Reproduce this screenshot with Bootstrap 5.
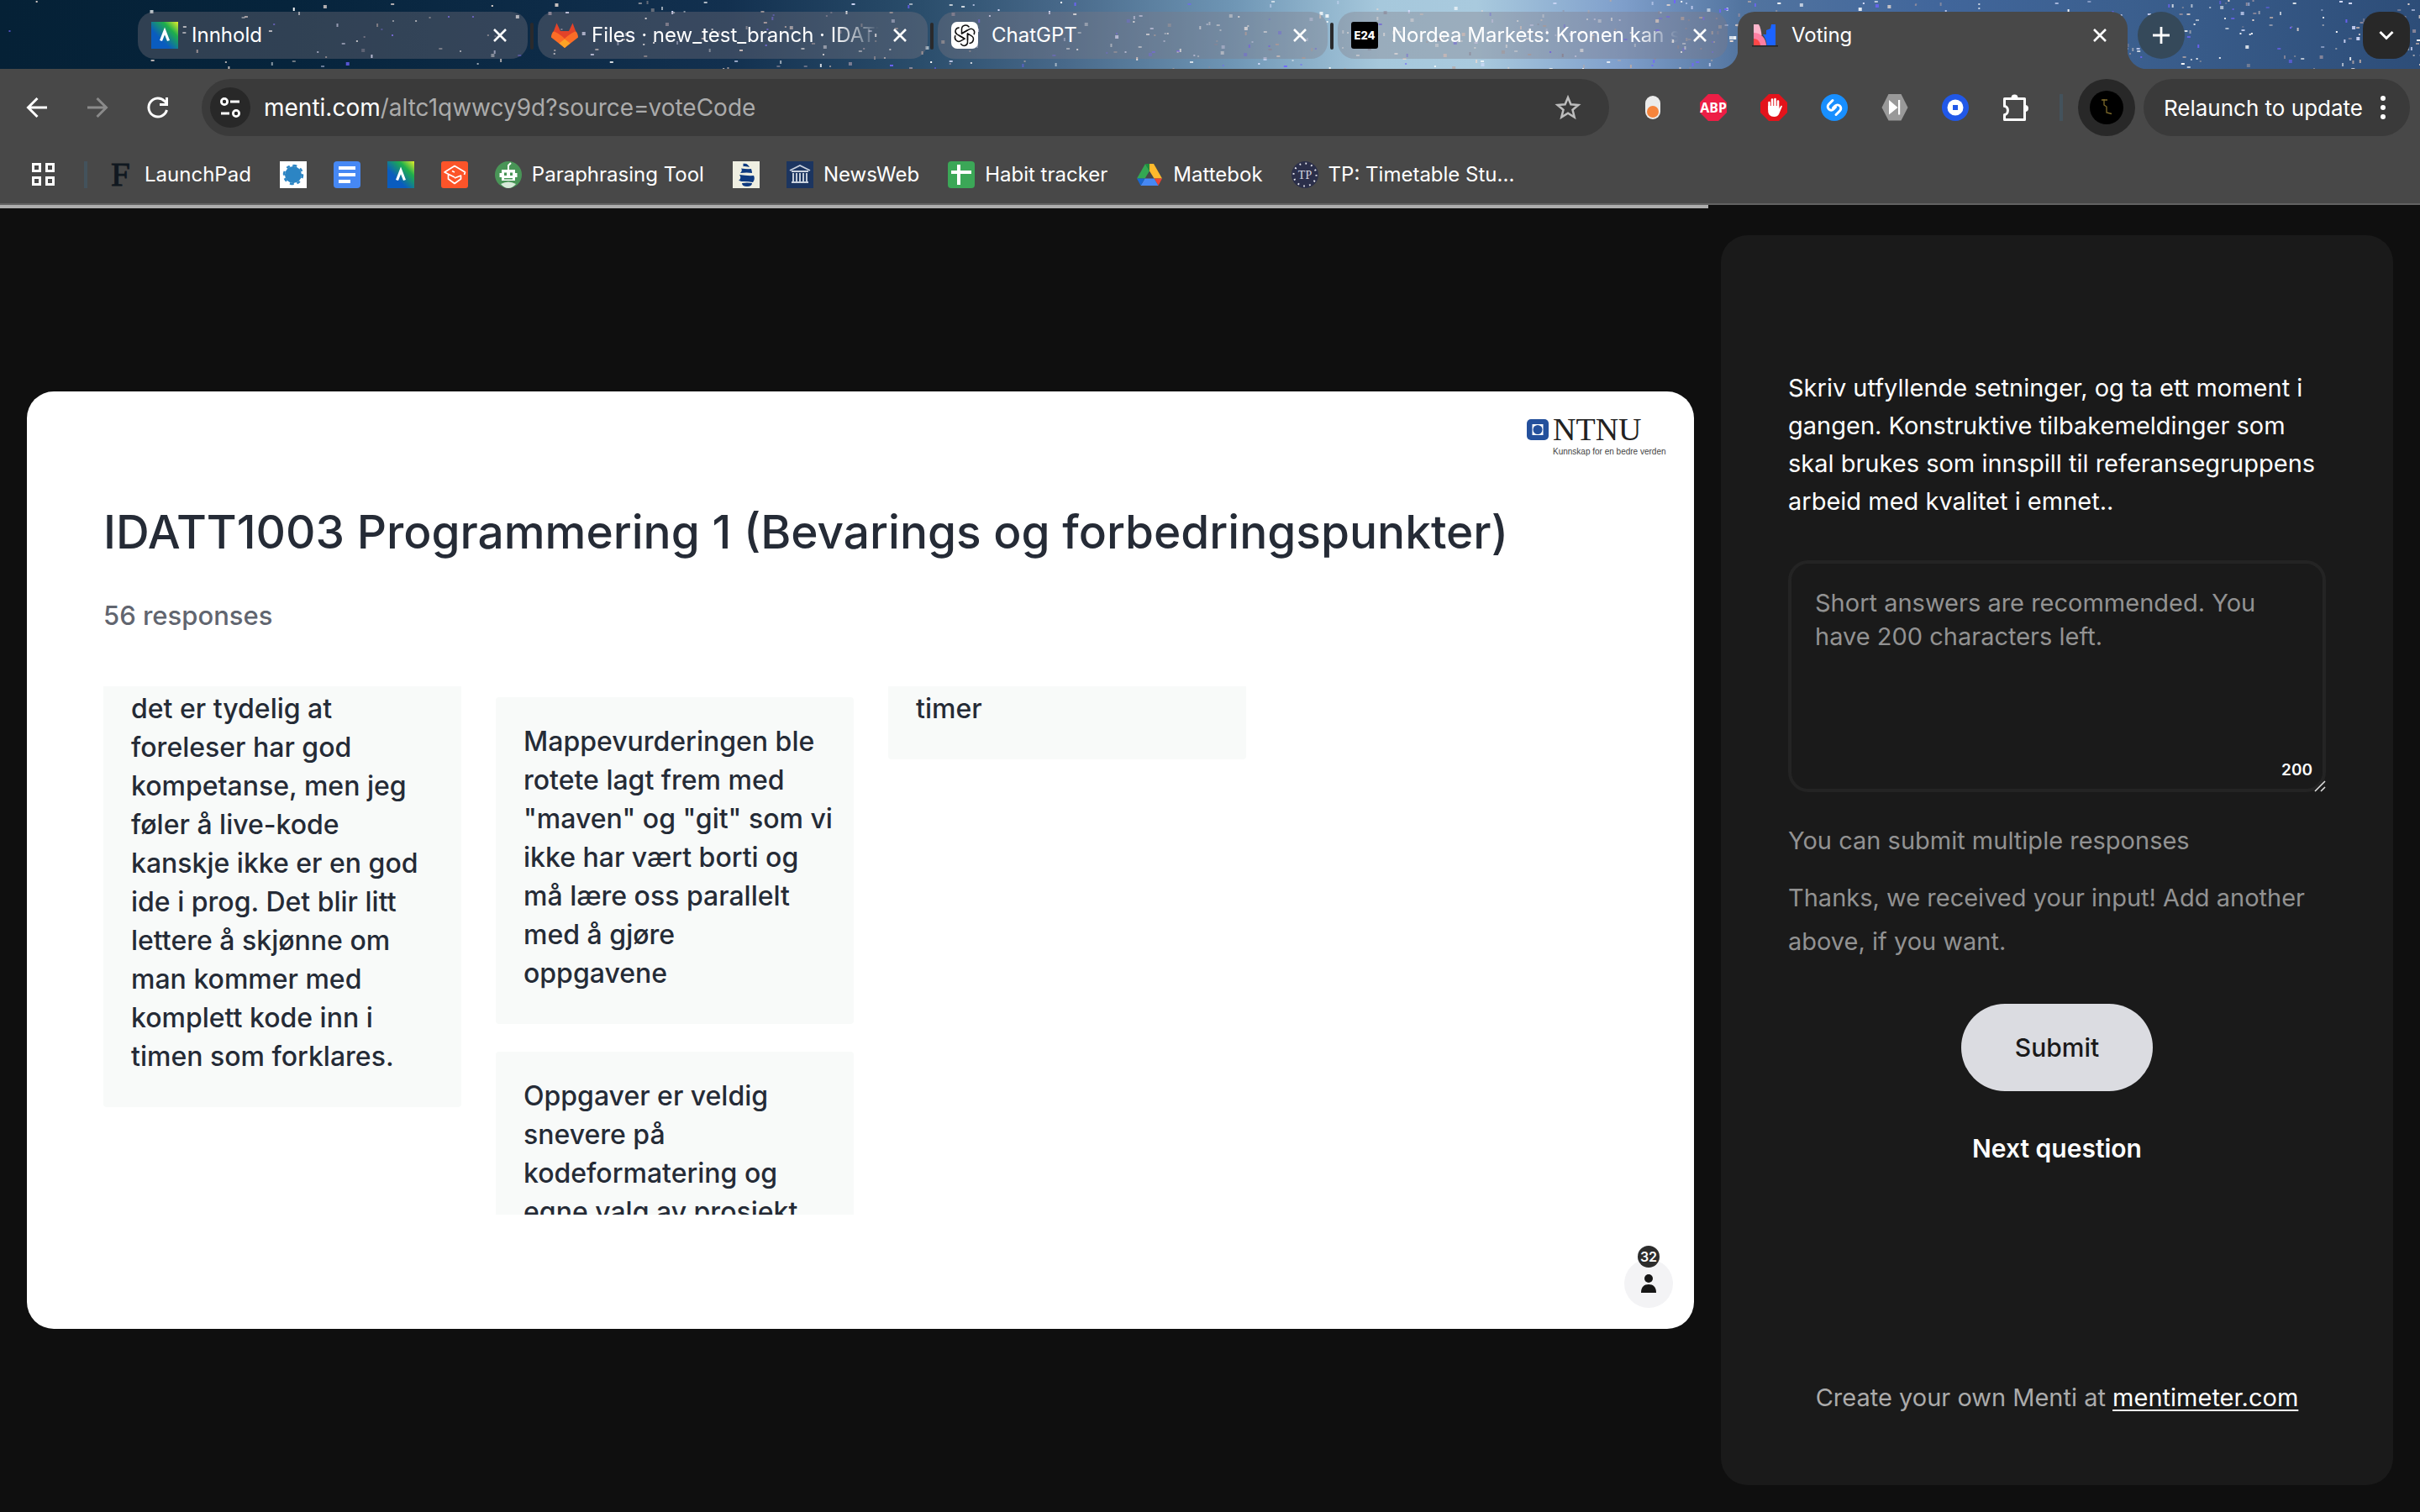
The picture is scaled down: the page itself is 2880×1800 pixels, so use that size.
<!DOCTYPE html>
<html lang="no">
<head>
<meta charset="utf-8">
<meta name="viewport" content="width=device-width, initial-scale=1">
<title>Voting</title>
<link href="https://cdn.jsdelivr.net/npm/bootstrap@5.3.0/dist/css/bootstrap.min.css" rel="stylesheet">
<style>
  body { background: #0f0f0f; font-family: Inter, "Noto Sans", sans-serif; font-size: 24px; color: #fff; }
  button { color: inherit; background: none; border: 0; padding: 0; }
  svg { display: block; flex: none; overflow: visible; }

  /* tab strip */
  .tabstrip { height: 82px; padding: 14px 12px 0 164px; gap: 12px; overflow: hidden;
    background: linear-gradient(90deg, #052136 0, #06243c 12%, #12304f 30%, #2a4d6b 38%, #48698a 44%, #6f96b5 51%, #a6c8dc 57%, #a9cade 61%, #7f9fcb 67%, #52749f 72%, #41669b 80%, #3b5f8e 88%, #2d4d78 100%); }
  .starfield { position: absolute; inset: 0; width: 100%; height: 100%; overflow: hidden; }
  .browser-tab { position: relative; flex: 0 1 464px; min-width: 0; height: 56px; border-radius: 20px; padding: 0 24px 0 16px; gap: 16px; background: rgba(128,120,128,.35); line-height: 32px; }
  .browser-tab + .browser-tab:not(.is-active)::before { content: ""; position: absolute; left: -9px; top: 13px; width: 4px; height: 32px; border-radius: 2px; background: #2a2a2c; }
  .tab-title { flex: 1 1 0; min-width: 0; white-space: nowrap; overflow: hidden; }
  .tab-fade { -webkit-mask-image: linear-gradient(90deg, #000 85%, transparent); mask-image: linear-gradient(90deg, #000 85%, transparent); }
  .is-active { height: 68px; background: #484848; border-radius: 20px 20px 0 0; padding-bottom: 12px; }
  .is-active::before, .is-active::after { content: ""; position: absolute; bottom: 0; width: 24px; height: 24px; }
  .is-active::before { left: -24px; background: radial-gradient(circle at 0 0, transparent 24px, #484848 25px); }
  .is-active::after { right: -24px; background: radial-gradient(circle at 100% 0, transparent 24px, #484848 25px); }
  .new-tab { width: 56px; height: 56px; border-radius: 50%; background: #35495a; }
  .tab-search { width: 56px; height: 56px; border-radius: 20px; background: #282828; }

  /* toolbar */
  .browser-bars { background: #484848; border-bottom: 2px solid #626262; }
  .tool-row { padding: 12px 12px 12px 30px; height: 92px; }
  .nav-icons { gap: 44px; width: 210px; }
  .omnibox { flex: 1 1 0; height: 68px; border-radius: 34px; background: #3a3a3a; padding: 0 34px 0 10px; gap: 16px; font-size: 28px; }
  .site-info { width: 48px; height: 48px; border-radius: 50%; background: #282828; }
  .url-path { color: #ababab; }
  .extensions { gap: 40px; padding: 0 36px; }
  .thin-rule { width: 4px; height: 32px; background: #43525c; }
  .profile { width: 68px; height: 68px; border-radius: 50%; background: #282828; margin: 0 10px 0 18px; }
  .relaunch { height: 68px; border-radius: 34px; background: #3a3a3a; padding: 0 20px 0 24px; gap: 12px; font-size: 26px; }
  .bookmarks { height: 68px; padding-left: 36px; gap: 32px; }
  .bookmarks a { color: #fff; text-decoration: none; gap: 12px; white-space: nowrap; }
  .bookmarks > .d-flex { margin-right: 2px; }
  .load-track { height: 4px; border-radius: 0; background: transparent; }
  .load-track .progress-bar { background: #acacac; }

  /* page */
  .stage { padding: 32px; gap: 32px; }
  .slide { flex: 1 1 0; min-width: 0; aspect-ratio: 16 / 9; background: #fff; color: #252b36; border-radius: 32px; padding: 131px 66px 136px 91px; }
  .slide h1 { font-size: 55px; line-height: 72px; font-weight: 500; margin: 0 0 41px; white-space: nowrap; }
  .response-count { font-size: 31px; line-height: 46px; font-weight: 500; color: #61656f; margin: 0 0 61px; }
  .wall { flex: 1 1 0; min-height: 0; overflow: hidden; display: grid; grid-template-columns: repeat(4, 1fr); column-gap: 41px; font-size: 32px; line-height: 46px; font-weight: 500; }
  .wall-col { gap: 33px; }
  .response { background: #f8faf9; border-radius: 4px; padding: 30px 0 37px 33px; white-space: nowrap; }
  .cut-top { padding-top: 4px; border-radius: 0 0 4px 4px; }
  .offset-col { padding-top: 13px; }
  .ntnu { position: absolute; top: 32px; right: 32px; width: 168px; height: 52px; }
  .people { position: absolute; right: 25px; bottom: 25px; width: 58px; height: 58px; border-radius: 50%; background: #f3f3f5; }
  .people-count { position: absolute; top: -16px; left: 16px; width: 26px; height: 26px; border-radius: 50%; background: #2c2c2c; color: #fff; font-size: 16px; line-height: 26px; font-weight: 600; text-align: center; }

  .vote-panel { flex: 0 0 800px; background: #1a1a1a; border-radius: 32px; padding: 159px 80px 78px; font-size: 29px; }
  .question { line-height: 45px; margin: 0 0 48px; white-space: nowrap; }
  .answer { height: 276px; resize: none; background: transparent; border: 4px solid #242424; border-radius: 24px; padding: 27px 28px; font-size: 29px; line-height: 40px; color: #fff; }
  .answer::placeholder { color: #929292; opacity: 1; }
  .answer:focus { background: transparent; color: #fff; }
  .chars-left { position: absolute; right: 16px; bottom: 12px; font-size: 19px; line-height: 28px; font-weight: 600; }
  .grip { position: absolute; right: 0; bottom: 0; }
  .hint { color: #929292; line-height: 52px; margin: 0; }
  .submit-btn { width: 228px; height: 104px; border-radius: 52px; background: #dbdce1; color: #1a1a1a; font-size: 30px; font-weight: 500; }
  .next-btn { font-size: 30px; line-height: 40px; font-weight: 600; }
  .credit { color: #ababab; line-height: 52px; }
  .credit a { color: #fff; text-underline-offset: 4px; }
</style>
</head>
<body class="d-flex flex-column min-vh-100">

<header>
  <div class="tabstrip d-flex align-items-start position-relative">
    <svg class="starfield" id="stars" aria-hidden="true"></svg>

    <div class="browser-tab d-flex align-items-center">
      <svg width="32" height="32" viewBox="0 0 32 32"><defs><linearGradient id="bb" x1="0" y1="1" x2="1" y2="0"><stop offset=".35" stop-color="#0a5cbf"/><stop offset=".72" stop-color="#1fae4b"/><stop offset="1" stop-color="#e6ee2a"/></linearGradient></defs><path fill="url(#bb)" d="M0 0h32v32H0z"/><path d="M11.500 22.500 16 11l4.500 11.500" fill="none" stroke="#fff" stroke-width="3.200"/></svg>
      <span class="tab-title">Innhold</span>
      <button aria-label="Close tab"><svg width="18" height="18" viewBox="0 0 18 18"><path d="m2 2 14 14M16 2 2 16" stroke="#fff" stroke-width="2.600"/></svg></button>
    </div>

    <div class="browser-tab d-flex align-items-center">
      <svg width="32" height="32" viewBox="0 0 32 32"><path fill="#e24329" d="M6.500 1.500 11 11h10l4.500-9.500L31 16 16 31 1 16z"/><path fill="#fc6d26" d="M0 18.500C0 15 1.500 12 3 11.500c3 .5 8 4 13 8.500 5-4.500 10-8 13-8.500 1.500.5 3 3.500 3 7L16 31z"/><path fill="#fca326" d="m9.500 25.500 6.500-5 6.500 5L16 31z"/></svg>
      <span class="tab-title tab-fade">Files · new_test_branch · IDATT</span>
      <button aria-label="Close tab"><svg width="18" height="18" viewBox="0 0 18 18"><path d="m2 2 14 14M16 2 2 16" stroke="#fff" stroke-width="2.600"/></svg></button>
    </div>

    <div class="browser-tab d-flex align-items-center">
      <svg width="32" height="32" viewBox="0 0 32 32"><rect width="32" height="32" rx="7" fill="#fff"/><g fill="none" stroke="#111" stroke-width="1.500" stroke-linecap="round"><path id="petal" d="M12.500 14V8.800c0-5 6-6.300 8.600-2.800M12.500 14l3.500-2 5.500-3.200c4-2 7.500 2 5.700 5.800"/><use href="#petal" transform="rotate(120 16 16)"/><use href="#petal" transform="rotate(240 16 16)"/><path id="inner" d="M19.500 14v7.500"/><use href="#inner" transform="rotate(120 16 16)"/><use href="#inner" transform="rotate(240 16 16)"/></g></svg>
      <span class="tab-title">ChatGPT</span>
      <button aria-label="Close tab"><svg width="18" height="18" viewBox="0 0 18 18"><path d="m2 2 14 14M16 2 2 16" stroke="#fff" stroke-width="2.600"/></svg></button>
    </div>

    <div class="browser-tab d-flex align-items-center">
      <svg width="32" height="32" viewBox="0 0 32 32"><rect width="32" height="32" rx="3"/><text x="16" y="21" text-anchor="middle" font-size="13" font-weight="800" fill="#fff">E24</text></svg>
      <span class="tab-title tab-fade">Nordea Markets: Kronen kan styrke</span>
      <button aria-label="Close tab"><svg width="18" height="18" viewBox="0 0 18 18"><path d="m2 2 14 14M16 2 2 16" stroke="#fff" stroke-width="2.600"/></svg></button>
    </div>

    <div class="browser-tab is-active d-flex align-items-center">
      <svg width="32" height="32" viewBox="0 0 32 32"><path fill="#ffb5cb" d="M3 3h6c2 3 3 8 3.500 13L3 18z"/><path fill="#ff7fa3" d="M3 13c8 0 15 6 15 16H3z"/><path fill="#ff4747" d="M3 20c5 0 8 4 8 9H3z"/><path fill="#1c63ff" d="M29 3h-5l-1 5-5 2v5h-4c3 4 5 9 4.500 14H29z"/><path fill="#222" d="M1 28h31v1.500H1z"/></svg>
      <span class="tab-title">Voting</span>
      <button aria-label="Close tab"><svg width="18" height="18" viewBox="0 0 18 18"><path d="m2 2 14 14M16 2 2 16" stroke="#fff" stroke-width="2.600"/></svg></button>
    </div>

    <button class="new-tab d-flex align-items-center justify-content-center position-relative" aria-label="New tab"><svg width="22" height="22" viewBox="0 0 22 22"><path d="M11 1v20M1 11h20" stroke="#fff" stroke-width="2.800"/></svg></button>
    <button class="tab-search d-flex align-items-center justify-content-center position-relative ms-auto" aria-label="Search tabs"><svg width="20" height="12" viewBox="0 0 20 12"><path d="m2.500 2 7.500 7.500L17.500 2" fill="none" stroke="#fff" stroke-width="3"/></svg></button>
  </div>

  <div class="browser-bars">
    <nav class="tool-row d-flex align-items-center" aria-label="Toolbar">
      <div class="nav-icons d-flex">
        <button aria-label="Back"><svg width="28" height="28" viewBox="0 0 28 28"><path d="M26 14H4M14.500 3 3.500 14l11 11" fill="none" stroke="#fff" stroke-width="3"/></svg></button>
        <button aria-label="Forward"><svg width="28" height="28" viewBox="0 0 28 28"><path d="M2 14h22M13.500 3l11 11-11 11" fill="none" stroke="#8a8a8a" stroke-width="3"/></svg></button>
        <button aria-label="Reload"><svg width="28" height="28" viewBox="0 0 28 28"><path d="M24.500 17A11 11 0 1 1 22 6.500l2.500 2.500" fill="none" stroke="#fff" stroke-width="3"/><path d="M26 2v10H16V9h7V2z" fill="#fff"/></svg></button>
      </div>
      <div class="omnibox d-flex align-items-center">
        <button class="site-info d-flex align-items-center justify-content-center" aria-label="Site information"><svg width="26" height="26" viewBox="0 0 26 26" fill="none" stroke="#fff" stroke-width="2.800"><circle cx="6" cy="6" r="3.600"/><path d="M13 6h11M2 20h10"/><circle cx="20" cy="20" r="3.600"/></svg></button>
        <span class="flex-grow-1">menti.com<span class="url-path">/altc1qwwcy9d?source=voteCode</span></span>
        <button aria-label="Bookmark this page"><svg width="30" height="30" viewBox="0 0 30 30"><path d="m15 3 3.400 8.300 9 .7-6.900 5.800 2.200 8.700-7.700-4.700-7.700 4.700 2.200-8.700L2.600 12l9-.7z" fill="none" stroke="#bdbdbd" stroke-width="2.500"/></svg></button>
      </div>
      <div class="extensions d-flex align-items-center">
        <svg width="32" height="32" viewBox="0 0 32 32"><rect x="7" y="2" width="18" height="28" rx="9" fill="#ebebeb"/><circle cx="16" cy="21" r="7" fill="#f5843c"/></svg>
        <svg width="32" height="32" viewBox="0 0 32 32"><path fill="#ed1e45" d="M10 0h12l10 10v12L22 32H10L0 22V10z"/><text x="16" y="22" text-anchor="middle" font-size="16" font-weight="700" fill="#fff" font-family="Noto Sans">ABP</text></svg>
        <svg width="32" height="32" viewBox="0 0 32 32"><path fill="#e3131b" d="M10 0h12l10 10v12L22 32H10L0 22V10z"/><path d="M10.500 18V10M14 16V6.500M17.500 16V6M21 17V8.500" stroke="#fff" stroke-width="2.600" stroke-linecap="round"/><path fill="#fff" d="M9.200 14h13v3.500l2-3.200c.8-1 2-.4 1.600.7L22 24c-1 2-3 3-5.500 3-5 0-7.300-3-7.300-7z"/></svg>
        <svg width="32" height="32" viewBox="0 0 32 32"><circle cx="16" cy="16" r="16" fill="#188fff"/><path d="M14 7.500 9.500 12c-2 2-1.500 4.500 0 6s4 1.500 5.500 0l2.500-2.500M18 24.500l4.500-4.500c2-2 1.500-4.500 0-6s-4-1.500-5.500 0l-2.500 2.500" fill="none" stroke="#fff" stroke-width="3" stroke-linecap="round"/></svg>
        <svg width="32" height="32" viewBox="0 0 32 32"><path fill="#999" d="M8.500 0h15L31.500 16l-8 15.500h-15L.5 16z"/><path fill="#fff" d="m9 7 10.500 9L9 24.500zM20 7h2.200v17.500H20z"/></svg>
        <svg width="32" height="32" viewBox="0 0 32 32"><circle cx="16" cy="16" r="16" fill="#2158e8"/><circle cx="16" cy="16" r="9.500" fill="#fff"/><rect x="13" y="13" width="6" height="6" fill="#2158e8"/></svg>
        <svg width="32" height="34" viewBox="0 0 32 34"><path d="M2.500 6.500h24v25h-24v-6c5 0 5.500-10 0-10z" fill="none" stroke="#fff" stroke-width="3" stroke-linejoin="round"/><path fill="#fff" d="M10.500 5.500a4 4 0 0 1 8 0zM27 14a4 4 0 0 1 0 8z"/></svg>
      </div>
      <div class="thin-rule"></div>
      <button class="profile d-flex align-items-center justify-content-center" aria-label="Profile"><svg width="40" height="40" viewBox="0 0 40 40"><circle cx="20" cy="20" r="20"/><path d="M14 11h7M17 10v7l3 2v7l6 1.500" fill="none" stroke="#7d6a2a" stroke-width="1.300"/></svg></button>
      <button class="relaunch d-flex align-items-center text-nowrap">Relaunch to update <svg width="24" height="32" viewBox="0 0 24 32" fill="#fff"><circle cx="12" cy="5" r="3"/><circle cx="12" cy="16" r="3"/><circle cx="12" cy="27" r="3"/></svg></button>
    </nav>

    <nav class="bookmarks d-flex align-items-center" aria-label="Bookmarks">
      <button aria-label="Apps"><svg width="32" height="32" viewBox="0 0 32 32" fill="none" stroke="#fff" stroke-width="3"><path d="M3.500 3.500h8v8h-8zM19.500 3.500h8v8h-8zM3.500 19.500h8v8h-8zM19.500 19.500h8v8h-8z"/></svg></button>
      <div class="d-flex align-items-center gap-4">
        <div class="thin-rule"></div>
        <a href="#" class="d-flex align-items-center"><svg width="32" height="32" viewBox="0 0 32 32"><text x="4" y="29" font-family="Liberation Serif" font-size="41" fill="#101820" stroke="#101820">F</text></svg>LaunchPad</a>
      </div>
      <a href="#" aria-label="Hub"><svg width="32" height="32" viewBox="0 0 32 32"><path fill="#fff" d="M0 0h32v32H0z"/><circle cx="16" cy="16" r="10" fill="#2c85c4"/><circle cx="16" cy="16" r="11" fill="none" stroke="#2c85c4" stroke-width="2.500" stroke-dasharray="4 4.640"/><path d="M16 4v24M4 16h24" stroke="#2c85c4" stroke-width="1.500"/></svg></a>
      <a href="#" aria-label="Docs"><svg width="32" height="32" viewBox="0 0 32 32"><rect width="32" height="32" rx="4" fill="#4688f4"/><path fill="#fff" d="M6 6h20v4H6zM6 14h20v4H6zM6 22h14v4H6z"/></svg></a>
      <a href="#" aria-label="Blackboard"><svg width="32" height="32" viewBox="0 0 32 32"><path fill="url(#bb)" d="M0 0h32v32H0z"/><path d="M11.500 22.500 16 11l4.500 11.500" fill="none" stroke="#fff" stroke-width="3.200"/></svg></a>
      <a href="#" aria-label="Study"><svg width="32" height="32" viewBox="0 0 32 32"><rect width="32" height="32" rx="3" fill="#fc5429"/><path d="M16 19 4 13l12-7.500L28.500 13l-1 3M16 13l-3-1.500M8.500 16v5l7.500 5.500 7.500-5.500v-4L16 20" fill="none" stroke="#fff" stroke-width="1.700" stroke-linejoin="round"/></svg></a>
      <a href="#" class="d-flex align-items-center"><svg width="32" height="32" viewBox="0 0 32 32"><circle cx="16" cy="16" r="16" fill="#499557"/><path fill="#fff" d="M8 10h16v13H8zM5.500 14H8v5H5.500zM24 14h2.500v5H24z"/><path d="M16 10V5l3-3" stroke="#fff" stroke-width="2" fill="none"/><path fill="#499557" d="M11 13.500h3V17h-3zM18 13.500h3V17h-3zM11 20h10v1.500H11z"/><path fill="#d7ead9" d="M7 27q9-5 18 0-4 5-9 5t-9-5z"/></svg>Paraphrasing Tool</a>
      <a href="#" aria-label="Ship"><svg width="32" height="32" viewBox="0 0 32 32"><path fill="#efefe2" d="M0 0h32v32H0z"/><path fill="#0e3a80" d="M12 3c5-1 6 1 8 4-3-1-5-1-8-1 1-1 1-2 0-3zM10 8.500q7 1 12 .5 1 3 1 5-6-1-14 0 3-3 1-5.500zM8 16q9 1.500 17 1 2 4-1 8-7-1.500-14-1-1-1-3-1 4-3 1-7zM11 26q6-1 12 0 0 4-6 4t-6-4z"/></svg></a>
      <a href="#" class="d-flex align-items-center"><svg width="32" height="32" viewBox="0 0 32 32"><path fill="#1c3560" d="M0 0h32v32H0z"/><path d="m4 11 12-6 12 6M6 12h20M8 14v10M12 14v10M16 14v10M20 14v10M24 14v10M6 25h20" fill="none" stroke="#c9d1de" stroke-width="1.900"/></svg>NewsWeb</a>
      <a href="#" class="d-flex align-items-center"><svg width="32" height="32" viewBox="0 0 32 32"><rect width="32" height="32" rx="4" fill="#3ba757"/><path fill="#fff" d="M4 11h24v4H4z"/><path fill="#fff" d="M11 4h4v24h-4z"/></svg>Habit tracker</a>
      <a href="#" class="d-flex align-items-center"><svg width="32" height="32" viewBox="0 0 32 32"><path fill="#33a852" d="M11 3 1 20.500h9.500l5.500-9z"/><path fill="#1e8e3e" d="m11 3 5 8.500L21 3z"/><path fill="#ffba2c" d="M21 3h-5l0 8.500 5.500 9H31z"/><path fill="#ea4335" d="M31 20.500h-9.500l5 8.500z"/><path fill="#4688f4" d="M10.500 20.500h11l5 8.500h-21z"/><path fill="#1967d2" d="M1 20.500h9.500l-5 8.500z"/></svg>Mattebok</a>
      <a href="#" class="d-flex align-items-center"><svg width="32" height="32" viewBox="0 0 32 32"><circle cx="16" cy="16" r="16" fill="#2b2f4a"/><circle cx="16" cy="16" r="13.500" fill="none" stroke="#e6e6ee" stroke-width="2" stroke-dasharray="1.800 5.270"/><text x="16" y="21" text-anchor="middle" font-family="Liberation Serif" font-size="14" fill="#d4d4e0">TP</text></svg>TP: Timetable Stu...</a>
    </nav>
  </div>
  <div class="progress load-track" role="progressbar" aria-label="Loading"><div class="progress-bar" style="width: 70.6%"></div></div>
</header>

<main class="stage flex-grow-1 d-flex align-items-center">
  <section class="slide position-relative d-flex flex-column">
    <svg class="ntnu" viewBox="0 0 168 52" role="img" aria-label="NTNU"><rect x="1" y="1" width="26" height="25" rx="5" fill="#24509c"/><rect x="7.500" y="7" width="13" height="13" fill="#fff"/><circle cx="14" cy="13.500" r="5.500" fill="#24509c"/><text x="32" y="26" font-family="Liberation Serif" font-size="38" fill="#222">NTNU</text><text x="32" y="43" font-family="Liberation Sans Narrow, Liberation Sans" font-size="10" fill="#444">Kunnskap for en bedre verden</text></svg>
    <h1>IDATT1003 Programmering 1 (Bevarings og forbedringspunkter)</h1>
    <p class="response-count">56 responses</p>
    <div class="wall">
      <div class="wall-col d-flex flex-column">
        <div class="response cut-top">det er tydelig at<br>foreleser har god<br>kompetanse, men jeg<br>føler å live-kode<br>kanskje ikke er en god<br>ide i prog. Det blir litt<br>lettere å skjønne om<br>man kommer med<br>komplett kode inn i<br>timen som forklares.</div>
      </div>
      <div class="wall-col offset-col d-flex flex-column">
        <div class="response">Mappevurderingen ble<br>rotete lagt frem med<br>"maven" og "git" som vi<br>ikke har vært borti og<br>må lære oss parallelt<br>med å gjøre<br>oppgavene</div>
        <div class="response">Oppgaver er veldig<br>snevere på<br>kodeformatering og<br>egne valg av prosjekt</div>
      </div>
      <div class="wall-col d-flex flex-column">
        <div class="response cut-top">timer</div>
      </div>
    </div>
    <div class="people d-flex align-items-center justify-content-center">
      <svg width="18" height="22" viewBox="0 0 18 22" fill="#161616"><circle cx="9" cy="5" r="5"/><path d="M0 22c0-7 3.500-10 9-10s9 3 9 10z"/></svg>
      <span class="people-count">32</span>
    </div>
  </section>

  <form class="vote-panel align-self-stretch d-flex flex-column">
    <label for="answer" class="question">Skriv utfyllende setninger, og ta ett moment i<br>gangen. Konstruktive tilbakemeldinger som<br>skal brukes som innspill til referansegruppens<br>arbeid med kvalitet i emnet..</label>
    <div class="position-relative mb-4">
      <textarea id="answer" class="answer form-control shadow-none" maxlength="200" placeholder="Short answers are recommended. You have 200 characters left."></textarea>
      <span class="chars-left">200</span>
      <svg class="grip" width="14" height="14" viewBox="0 0 14 14"><path d="M1 13 13 1M8 13l5-5" stroke="#ddd" stroke-width="1.600"/></svg>
    </div>
    <p class="hint pt-2">You can submit multiple responses</p>
    <p class="hint pt-3">Thanks, we received your input! Add another<br>above, if you want.</p>
    <div class="d-flex flex-column align-items-center gap-5 mt-5">
      <button type="submit" class="submit-btn">Submit</button>
      <button type="button" class="next-btn">Next question</button>
    </div>
    <div class="credit text-center mt-auto">Create your own Menti at <a href="#">mentimeter.com</a></div>
  </form>
</main>

<script src="https://cdn.jsdelivr.net/npm/bootstrap@5.3.0/dist/js/bootstrap.bundle.min.js"></script>
<script>
  // Scatter the wallpaper stars, denser towards the right of the strip
  const sky = document.getElementById('stars');
  let seed = 11;
  const rnd = () => (seed = (seed * 16807) % 2147483647) / 2147483647;
  const tints = ['#ffffff', '#ffffff', '#e8d9d2', '#b9a9a6', '#d9dfff', '#8f8a9c', '#6f63ff'];
  for (let i = 0; i < 620; i++) {
    const dot = document.createElementNS('http://www.w3.org/2000/svg', 'rect');
    const x = Math.pow(rnd(), 0.6) * 100;
    dot.setAttribute('x', x + '%');
    dot.setAttribute('y', Math.floor(rnd() * 82));
    dot.setAttribute('width', rnd() > .6 ? 4 : 2);
    dot.setAttribute('height', rnd() > .6 ? 4 : 2);
    dot.setAttribute('fill', tints[Math.floor(rnd() * tints.length)]);
    dot.setAttribute('opacity', .45 + rnd() * .55);
    sky.appendChild(dot);
  }
</script>
</body>
</html>
